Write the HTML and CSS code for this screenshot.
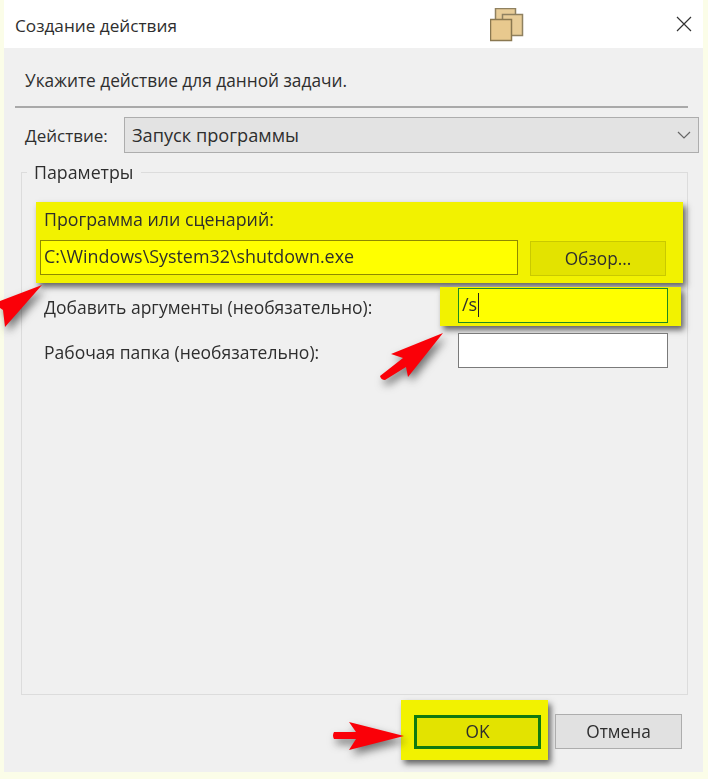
FILE: index.html
```html
<!DOCTYPE html>
<html lang="ru">

<head>
    <meta charset="UTF-8">
    <title>Создание действия</title>
    <link rel="stylesheet" href="styles.css">
</head>

<body>
    <div class="window">
        <div class="title-bar">
            <span class="title">Создание действия</span>
            <svg class="title-icon" width="34" height="34" viewBox="0 0 34 34">
                <rect x="5.5" y="0.5" width="20" height="21" fill="#e8cd98" stroke="#8f8160" stroke-width="1.5"/>
                <rect x="12.5" y="6.5" width="20" height="21" fill="#e8cd98" stroke="#8f8160" stroke-width="1.5"/>
                <rect x="0.5" y="11.5" width="21" height="21" fill="#e8c98e" stroke="#8a7850" stroke-width="1.5"/>
            </svg>
            <svg class="close-icon" width="16" height="16" viewBox="0 0 16 16">
                <path d="M1 1 L15 15 M15 1 L1 15" stroke="#333" stroke-width="1.2" fill="none"/>
            </svg>
        </div>

        <div class="content">
            <p class="prompt">Укажите действие для данной задачи.</p>
            <div class="divider"></div>

            <div class="action-row">
                <label class="action-label">Действие:</label>
                <div class="combo">
                    <span>Запуск программы</span>
                    <svg width="14" height="8" viewBox="0 0 14 8">
                        <path d="M1 1 L7 7 L13 1" stroke="#666" stroke-width="1.2" fill="none"/>
                    </svg>
                </div>
            </div>

            <fieldset class="group">
                <legend>Параметры</legend>

                <div class="mark program">
                    <div class="program-label">Программа или сценарий:</div>
                    <div class="program-row">
                        <div class="input input-program">C:\Windows\System32\shutdown.exe</div>
                        <div class="btn btn-browse">Обзор...</div>
                    </div>
                </div>

                <div class="row row-args">
                    <label class="row-label">Добавить аргументы (необязательно):</label>
                    <div class="field mark">
                        <div class="input input-args">/s<span class="caret"></span></div>
                    </div>
                </div>

                <div class="row row-dir">
                    <label class="row-label">Рабочая папка (необязательно):</label>
                    <div class="field">
                        <div class="input input-empty"></div>
                    </div>
                </div>
            </fieldset>

            <div class="footer">
                <div class="mark ok-mark">
                    <div class="btn btn-ok">OK</div>
                </div>
                <div class="btn btn-cancel">Отмена</div>
            </div>
        </div>

        <!-- red arrows drawn over the dialog -->
        <svg class="arrow arrow-left" width="50" height="50" viewBox="0 0 50 50">
            <path d="M38 1 L-4 17 L-4 24 L-1 26 L1 43 Z" fill="#fa0008"/>
        </svg>
        <svg class="arrow arrow-args" width="70" height="50" viewBox="0 0 70 50">
            <path d="M64 1 L12 22 L24 26 L1 44 Q2 48 6 48 L27 35 L29 45 Z" fill="#fa0008"/>
        </svg>
        <svg class="arrow arrow-ok" width="74" height="32" viewBox="0 0 74 32">
            <path d="M72 16 L17 2 L24 12 L2 12 Q0 15.5 2 19 L24 19 L17 30 Z" fill="#fa0008"/>
        </svg>
    </div>
</body>

</html>
```

FILE: styles.css
```css
* {
    box-sizing: border-box;
}

body {
    margin: 0;
    height: 779px;
    overflow: hidden;
    background-color: #fbfde8;
    font-family: "Open Sans", "Noto Sans", sans-serif;
    font-size: 17.3px;
    color: #2e2e2e;
}

/* the reference is a soft, upscaled screenshot */
.window {
    position: relative;
    display: flex;
    flex-direction: column;
    width: 699px;
    height: 772px;
    margin-left: 4px;
    filter: blur(0.4px);
}

.title-bar {
    display: flex;
    align-items: center;
    height: 48px;
    padding: 0 10px 0 11px;
    background-color: #fff;
}

.title {
    width: 475px;
    padding-top: 2px;
    font-size: 17.2px;
}

.title-icon {
    margin-top: 2px;
}

.close-icon {
    margin-left: auto;
    margin-right: 1px;
}

.content {
    display: flex;
    flex: 1;
    flex-direction: column;
    background-color: #f0f0f0;
}

.prompt {
    margin: 23px 0 0 21px;
    line-height: 20px;
}

.divider {
    height: 2px;
    margin: 15px 15px 0 11px;
    background-color: #a9a9a9;
}

.action-row {
    display: flex;
    align-items: center;
    margin-top: 9px;
}

.action-label {
    width: 120px;
    padding-left: 21px;
    font-size: 17px;
}

.combo {
    display: flex;
    align-items: center;
    justify-content: space-between;
    width: 575px;
    height: 36px;
    padding: 0 7px 0 7px;
    background-color: #e3e3e3;
    border: 1px solid #adadad;
    font-size: 18.2px;
}

.group {
    flex: 1;
    min-height: 0;
    margin: 9px 15px 0 17px;
    padding: 0;
    border: 1px solid #dcdcdc;
}

.group legend {
    margin-left: 5px;
    padding: 0 7px;
    line-height: 20px;
    font-size: 17.8px;
}

.mark {
    background-color: #f2f200;
    box-shadow: 3px 4px 6px rgba(40, 40, 40, 0.7);
}

.program {
    height: 81px;
    margin: 20px 4px 0 14px;
    padding: 6px 17px 0 4px;
}

.program-label {
    padding-left: 4px;
    line-height: 22px;
    font-size: 17.8px;
}

.program-row {
    display: flex;
    align-items: flex-start;
    justify-content: space-between;
    margin-top: 10px;
}

.input {
    height: 35px;
    line-height: 31px;
    border: 1px solid #7a7a7a;
}

.input-program {
    width: 478px;
    padding-left: 3px;
    background-color: #ffff00;
    border-color: #8f8a00;
    font-size: 17.9px;
}

.input-args {
    padding-left: 3px;
    background-color: #ffff00;
    border-color: #1f8a1f;
    font-size: 18px;
}

.input-empty {
    background-color: #fff;
}

.caret {
    display: inline-block;
    width: 1px;
    height: 24px;
    margin-left: 1px;
    vertical-align: -6px;
    background-color: #222;
}

.btn {
    text-align: center;
    line-height: 33px;
}

.btn-browse {
    width: 136px;
    height: 35px;
    margin-top: 1px;
    background-color: #e3e300;
    border: 1px solid #c9c900;
}

.row {
    display: flex;
    align-items: center;
}

.row-args {
    margin-top: 4px;
}

.row-dir {
    margin-top: 6px;
}

.row-label {
    width: 418px;
    padding-left: 22px;
    padding-top: 1px;
    font-size: 17.5px;
}

.field {
    width: 241px;
    padding: 1px 13px 3px 18px;
}

.footer {
    display: flex;
    justify-content: flex-end;
    align-items: flex-start;
    padding: 5px 21px 12px 0;
}

.ok-mark {
    width: 147px;
    height: 60px;
    padding: 15px 7px 0 13px;
}

.btn-ok {
    height: 34px;
    line-height: 28px;
    background-color: #e3e300;
    border: 3px solid #0f7a0f;
}

.btn-cancel {
    width: 127px;
    height: 35px;
    margin: 14px 0 0 7px;
    background-color: #e1e1e1;
    border: 1px solid #adadad;
}

/* the arrows sit on top of everything */
.arrow {
    position: absolute;
    overflow: visible;
    filter: drop-shadow(3px 5px 4px rgba(30, 30, 30, 0.6));
}

.arrow-left {
    left: 0;
    top: 284px;
}

.arrow-args {
    left: 375px;
    top: 332px;
}

.arrow-ok {
    left: 328px;
    top: 720px;
}
```
